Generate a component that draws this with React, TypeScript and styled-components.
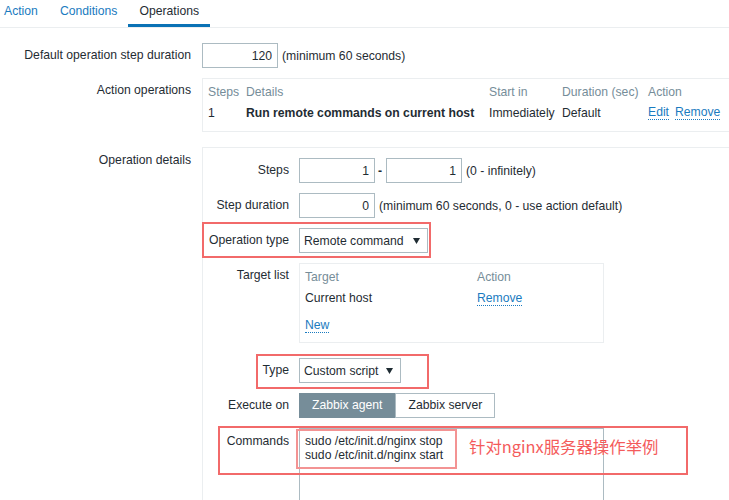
import React from 'react';
import styled, { createGlobalStyle } from 'styled-components';

const GlobalStyle = createGlobalStyle`
  html, body {
    margin: 0;
    padding: 0;
    background: #ffffff;
    overflow: hidden;
  }
  body {
    font-family: "Liberation Sans", Arial, sans-serif;
    font-size: 12.2px;
    color: #1f2c33;
  }
  * { box-sizing: border-box; }
`;

const Page = styled.div`
  position: relative;
  width: 745px;
  height: 500px;
  overflow: hidden;
`;

const TabBar = styled.nav`
  display: flex;
  margin-left: -7px;
  border-bottom: 1px solid #ebeef0;
`;

const Tab = styled.a<{ $active?: boolean }>`
  padding: 4px 11px 6px;
  line-height: 14px;
  border-bottom: 3px solid ${(p) => (p.$active ? '#0a72b5' : 'transparent')};
  color: ${(p) => (p.$active ? '#1f2c33' : '#1a7bc0')};
  text-decoration: none;
  cursor: pointer;
`;

const Form = styled.div`
  display: flex;
  flex-direction: column;
  padding-top: 15px;
`;

const FormRow = styled.div<{ $after?: number }>`
  display: grid;
  grid-template-columns: 191px 1fr;
  column-gap: 11px;
  margin-bottom: ${(p) => p.$after ?? 10}px;
`;

const Label = styled.label<{ $top?: number }>`
  text-align: right;
  padding-top: ${(p) => p.$top ?? 5}px;
  line-height: 14px;
  white-space: nowrap;
`;

const Inline = styled.div`
  display: flex;
  align-items: center;
  white-space: nowrap;
`;

const TextInput = styled.input<{ $w?: number }>`
  width: ${(p) => p.$w ?? 76}px;
  height: 25px;
  border: 1px solid #acbbc2;
  padding: 0 5px;
  margin: 0;
  text-align: right;
  font: inherit;
  color: #1f2c33;
  background: #fff;
  outline: none;
`;

const Hint = styled.span`
  margin-left: 4px;
  line-height: 14px;
`;

const Dash = styled.span`
  margin: 0 4px 0 3px;
  font-weight: bold;
`;

const TableBox = styled.div`
  border: 1px solid #ebeef0;
  padding: 4px 5px 8px;
`;

const OpsGrid = styled.div`
  display: grid;
  grid-template-columns: 38px 243px 73px 86px auto;
`;

const HeadCell = styled.div`
  color: #768d99;
  line-height: 14px;
  padding: 2px 0;
  white-space: nowrap;
`;

const Cell = styled.div<{ $bold?: boolean }>`
  line-height: 14px;
  height: 22px;
  padding: 5px 0 3px;
  white-space: nowrap;
  font-weight: ${(p) => (p.$bold ? 'bold' : 'normal')};
`;

const Links = styled.div`
  display: flex;
  gap: 6px;
`;

const Link = styled.a`
  color: #1a7bc0;
  border-bottom: 1px dotted #1a7bc0;
  text-decoration: none;
  line-height: 13px;
  cursor: pointer;
`;

const DetailsBox = styled.div`
  border: 1px solid #ebeef0;
  padding: 10px 0 30px;
  display: flex;
  flex-direction: column;
  gap: 10px;
`;

const SubRow = styled.div<{ $after?: number }>`
  display: grid;
  grid-template-columns: 86px 1fr;
  column-gap: 10px;
  margin-bottom: ${(p) => p.$after ?? 0}px;
`;

const Select = styled.div<{ $w: number }>`
  width: ${(p) => p.$w}px;
  height: 25px;
  border: 1px solid #acbbc2;
  padding: 0 7px 0 4px;
  display: flex;
  align-items: center;
  justify-content: space-between;
  white-space: nowrap;
  background: #fff;
`;

const Arrow = styled.svg`
  width: 7px;
  height: 6px;
  display: block;
`;

const TargetBox = styled.div`
  width: 305px;
  height: 80px;
  border: 1px solid #ebeef0;
  padding: 4px 5px 0;
`;

const TargetGrid = styled.div`
  display: grid;
  grid-template-columns: 172px auto;
`;

const NewRow = styled.div`
  padding-top: 10px;
  line-height: 14px;
`;

const Segmented = styled.div`
  display: flex;
`;

const SegButton = styled.span<{ $active?: boolean }>`
  height: 25px;
  line-height: 23px;
  padding: 0 12px;
  border: 1px solid ${(p) => (p.$active ? '#768d99' : '#acbbc2')};
  background: ${(p) => (p.$active ? '#768d99' : '#ffffff')};
  color: ${(p) => (p.$active ? '#ffffff' : '#1f2c33')};
  white-space: nowrap;
`;

const Commands = styled.textarea`
  width: 305px;
  height: 110px;
  border: 1px solid #acbbc2;
  padding: 5px 5px;
  margin: 0;
  font: inherit;
  line-height: 14px;
  color: #1f2c33;
  resize: none;
  overflow: hidden;
  outline: none;
  display: block;
`;

const Annotation = styled.div<{ $x: number; $y: number; $w: number; $h: number; $light?: boolean }>`
  position: absolute;
  left: ${(p) => p.$x}px;
  top: ${(p) => p.$y}px;
  width: ${(p) => p.$w}px;
  height: ${(p) => p.$h}px;
  border: 2px solid ${(p) => (p.$light ? '#f39393' : '#f26a6a')};
  pointer-events: none;
`;

const Note = styled.div`
  position: absolute;
  left: 469px;
  top: 436px;
  font-family: "Noto Sans CJK SC", "Noto Sans", sans-serif;
  font-size: 16.4px;
  line-height: 20px;
  color: #f45b5b;
  white-space: nowrap;
`;

const DownArrow = () => (
  <Arrow viewBox="0 0 7 6">
    <path d="M0 0 H7 L3.5 6 Z" fill="#1f2c33" />
  </Arrow>
);

export default function App() {
  return (
    <Page>
      <GlobalStyle />
      <TabBar>
        <Tab>Action</Tab>
        <Tab>Conditions</Tab>
        <Tab $active>Operations</Tab>
      </TabBar>

      <Form>
        <FormRow>
          <Label>Default operation step duration</Label>
          <Inline>
            <TextInput readOnly defaultValue="120" />
            <Hint>(minimum 60 seconds)</Hint>
          </Inline>
        </FormRow>

        <FormRow $after={15}>
          <Label>Action operations</Label>
          <TableBox>
            <OpsGrid>
              <HeadCell>Steps</HeadCell>
              <HeadCell>Details</HeadCell>
              <HeadCell>Start in</HeadCell>
              <HeadCell>Duration (sec)</HeadCell>
              <HeadCell>Action</HeadCell>
              <Cell>1</Cell>
              <Cell $bold>Run remote commands on current host</Cell>
              <Cell>Immediately</Cell>
              <Cell>Default</Cell>
              <Cell>
                <Links>
                  <Link>Edit</Link>
                  <Link>Remove</Link>
                </Links>
              </Cell>
            </OpsGrid>
          </TableBox>
        </FormRow>

        <FormRow>
          <Label $top={6}>Operation details</Label>
          <DetailsBox>
            <SubRow>
              <Label>Steps</Label>
              <Inline>
                <TextInput readOnly defaultValue="1" />
                <Dash>-</Dash>
                <TextInput readOnly defaultValue="1" />
                <Hint>(0 - infinitely)</Hint>
              </Inline>
            </SubRow>

            <SubRow>
              <Label>Step duration</Label>
              <Inline>
                <TextInput readOnly defaultValue="0" />
                <Hint>(minimum 60 seconds, 0 - use action default)</Hint>
              </Inline>
            </SubRow>

            <SubRow>
              <Label>Operation type</Label>
              <Inline>
                <Select $w={129}>
                  <span>Remote command</span>
                  <DownArrow />
                </Select>
              </Inline>
            </SubRow>

            <SubRow $after={5}>
              <Label>Target list</Label>
              <TargetBox>
                <TargetGrid>
                  <HeadCell>Target</HeadCell>
                  <HeadCell>Action</HeadCell>
                  <Cell>Current host</Cell>
                  <Cell>
                    <Link>Remove</Link>
                  </Cell>
                </TargetGrid>
                <NewRow>
                  <Link>New</Link>
                </NewRow>
              </TargetBox>
            </SubRow>

            <SubRow>
              <Label>Type</Label>
              <Inline>
                <Select $w={102}>
                  <span>Custom script</span>
                  <DownArrow />
                </Select>
              </Inline>
            </SubRow>

            <SubRow>
              <Label>Execute on</Label>
              <Segmented>
                <SegButton $active>Zabbix agent</SegButton>
                <SegButton>Zabbix server</SegButton>
              </Segmented>
            </SubRow>

            <SubRow>
              <Label $top={6}>Commands</Label>
              <div>
                <Commands
                  readOnly
                  defaultValue={'sudo /etc/init.d/nginx stop\nsudo /etc/init.d/nginx start'}
                />
              </div>
            </SubRow>
          </DetailsBox>
        </FormRow>
      </Form>

      <Annotation $x={202} $y={222} $w={229} $h={36} />
      <Annotation $x={256} $y={354} $w={173} $h={35} />
      <Annotation $x={218} $y={426} $w={470} $h={49} />
      <Annotation $x={296} $y={429} $w={161} $h={40} $light />
      <Note>针对nginx服务器操作举例</Note>
    </Page>
  );
}
